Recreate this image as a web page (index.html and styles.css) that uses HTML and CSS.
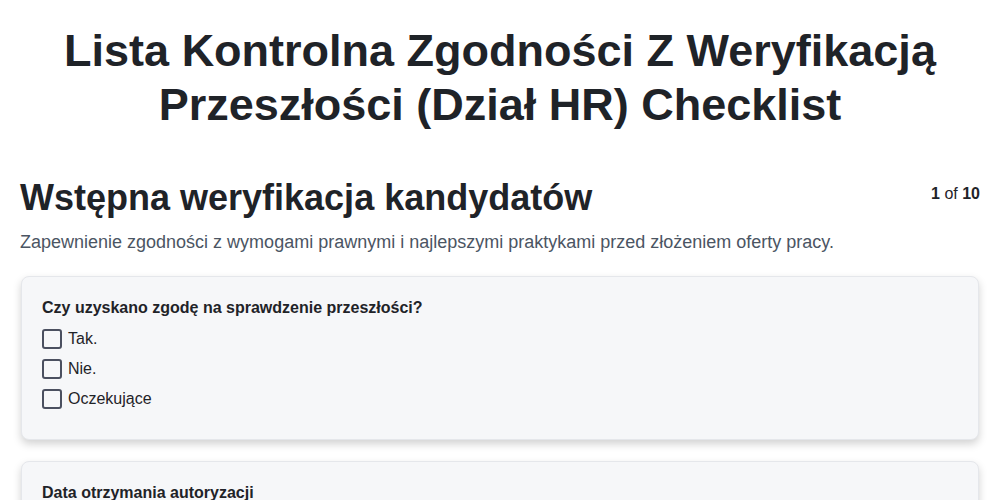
FILE: index.html
```html
<!DOCTYPE html>
<html lang="pl">
<head>
<meta charset="utf-8">
<title>Lista Kontrolna</title>
<link rel="stylesheet" href="styles.css">
</head>
<body>
<main class="page">
  <h1 class="title">Lista Kontrolna Zgodności Z Weryfikacją Przeszłości (Dział HR) Checklist</h1>
  <section class="section">
    <div class="section-head">
      <h2 class="section-title">Wstępna weryfikacja kandydatów</h2>
      <div class="pager"><b>1</b> of <b>10</b></div>
    </div>
    <p class="section-desc">Zapewnienie zgodności z wymogami prawnymi i najlepszymi praktykami przed złożeniem oferty pracy.</p>
    <div class="card">
      <div class="question">Czy uzyskano zgodę na sprawdzenie przeszłości?</div>
      <label class="option"><span class="box"></span><span>Tak.</span></label>
      <label class="option"><span class="box"></span><span>Nie.</span></label>
      <label class="option"><span class="box"></span><span>Oczekujące</span></label>
    </div>
    <div class="card">
      <div class="question">Data otrzymania autoryzacji</div>
      <div class="input"></div>
    </div>
  </section>
</main>
</body>
</html>
```
FILE: styles.css
```css
* { box-sizing: border-box; }
html, body { margin: 0; padding: 0; background: #ffffff; }
body {
  font-family: "Liberation Sans", Arial, sans-serif;
  color: #1f2328;
}
.page { padding: 24px 20px 20px; }
.title {
  margin: 0;
  text-align: center;
  font-size: 45px;
  line-height: 54px;
  font-weight: 700;
  color: #1f2328;
}
.section { margin-top: 44px; }
.section-head {
  display: flex;
  justify-content: space-between;
  align-items: flex-start;
}
.section-title {
  margin: 0;
  font-size: 36px;
  line-height: 44px;
  font-weight: 700;
  color: #1f2328;
}
.pager {
  font-size: 16px;
  line-height: 20px;
  padding-top: 8px;
  color: #1f2328;
}
.pager b { font-weight: 700; }
.section-desc {
  margin: 10px 0 22px;
  font-size: 18px;
  line-height: 24px;
  color: #4b5563;
}
.card {
  margin: 0 1px 21px;
  background: #f6f7f9;
  border: 1px solid #e5e7eb;
  border-radius: 8px;
  box-shadow: 0 4px 8px rgba(0, 0, 0, 0.18);
  padding: 20px 20px 25px;
}
.question {
  font-size: 16px;
  line-height: 22px;
  font-weight: 700;
  color: #1f2328;
  margin-bottom: 5px;
}
.option {
  display: flex;
  align-items: center;
  gap: 6px;
  height: 30px;
  font-size: 16px;
  color: #1f2328;
}
.box {
  width: 20px;
  height: 20px;
  border: 2px solid #4b5060;
  border-radius: 3px;
}
.input { height: 40px; }
```
